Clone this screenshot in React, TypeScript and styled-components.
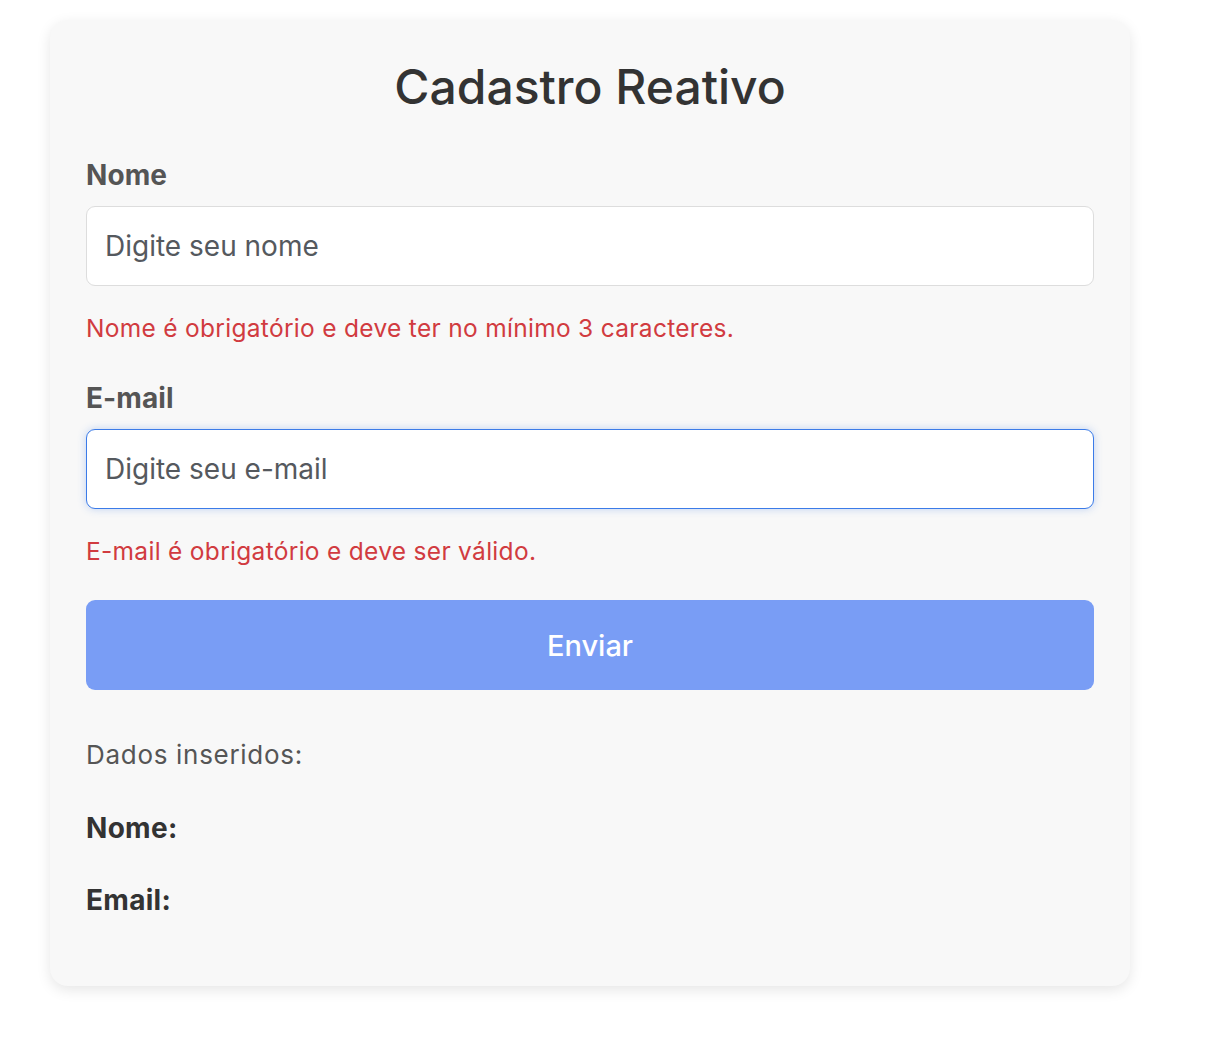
import React from "react";
import styled, { createGlobalStyle } from "styled-components";

const GlobalStyle = createGlobalStyle`
  html, body {
    margin: 0;
    padding: 0;
    background: #ffffff;
    font-family: Inter, "Noto Sans", "Liberation Sans", sans-serif;
  }
  * { box-sizing: border-box; }
`;

const Page = styled.div`
  padding: 20px 0 40px 50px;
`;

const Card = styled.form`
  width: 1080px;
  background: #f8f8f8;
  border-radius: 18px;
  box-shadow: 0 4px 14px rgba(0, 0, 0, 0.1);
  padding: 37px 36px 69px;
  display: flex;
  flex-direction: column;
`;

const Title = styled.h2`
  margin: 0 0 41px;
  text-align: center;
  font-size: 48px;
  line-height: 60px;
  font-weight: 500;
  color: #333333;
`;

const Field = styled.div<{ $last?: boolean }>`
  display: flex;
  flex-direction: column;
  margin-bottom: ${(p) => (p.$last ? "34px" : "38px")};
`;

const Label = styled.label`
  font-size: 28px;
  line-height: 34px;
  font-weight: 700;
  letter-spacing: 0.1px;
  color: #555555;
  margin-bottom: 14px;
`;

const Input = styled.input<{ $focused?: boolean }>`
  height: 80px;
  padding: 0 18px;
  font-family: inherit;
  font-size: 28px;
  border-radius: 9px;
  background: #ffffff;
  outline: none;
  border: 1px solid ${(p) => (p.$focused ? "#3b7be8" : "#dddddd")};
  box-shadow: ${(p) => (p.$focused ? "0 0 8px rgba(59, 123, 232, 0.3)" : "none")};
  color: #333;
  &::placeholder {
    color: #55595e;
  }
`;

const ErrorText = styled.span`
  margin-top: 27px;
  font-size: 24.5px;
  line-height: 30px;
  letter-spacing: 0.3px;
  color: #d13b40;
`;

const Button = styled.button`
  height: 90px;
  border: none;
  border-radius: 9px;
  background: #799df5;
  color: #ffffff;
  font-family: inherit;
  font-size: 29px;
  font-weight: 500;
  margin-bottom: 48px;
`;

const DataTitle = styled.p`
  margin: 0 0 39px;
  font-size: 26px;
  line-height: 34px;
  letter-spacing: 0.7px;
  color: #555555;
`;

const DataRow = styled.p`
  margin: 0 0 38px;
  font-size: 28px;
  line-height: 34px;
  font-weight: 700;
  letter-spacing: 0.3px;
  color: #333333;
  &:last-child {
    margin-bottom: 0;
  }
`;

export default function App() {
  return (
    <>
      <GlobalStyle />
      <Page>
        <Card onSubmit={(e) => e.preventDefault()}>
          <Title>Cadastro Reativo</Title>
          <Field>
            <Label>Nome</Label>
            <Input placeholder="Digite seu nome" />
            <ErrorText>Nome é obrigatório e deve ter no mínimo 3 caracteres.</ErrorText>
          </Field>
          <Field $last>
            <Label>E-mail</Label>
            <Input $focused placeholder="Digite seu e-mail" />
            <ErrorText>E-mail é obrigatório e deve ser válido.</ErrorText>
          </Field>
          <Button type="submit">Enviar</Button>
          <DataTitle>Dados inseridos:</DataTitle>
          <DataRow>Nome:</DataRow>
          <DataRow>Email:</DataRow>
        </Card>
      </Page>
    </>
  );
}
